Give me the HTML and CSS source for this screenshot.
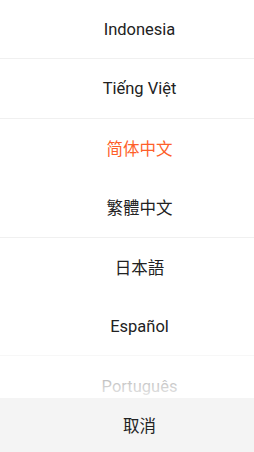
FILE: index.html
```html
<!DOCTYPE html>
<html lang="zh">
<head>
    <meta charset="UTF-8">
    <meta name="viewport" content="width=device-width, initial-scale=1.0">
    <title>语言</title>
    <link rel="stylesheet" href="styles.css">
</head>
<body>
    <!-- 语言列表 -->
    <div class="lang-list">
        <div class="lang-item line">Indonesia</div>
        <div class="lang-item line">Tiếng Việt</div>
        <div class="lang-item active">简体中文</div>
        <div class="lang-item line">繁體中文</div>
        <div class="lang-item">日本語</div>
        <div class="lang-item line">Español</div>
        <div class="lang-item">Português</div>
        <div class="fade"></div>
    </div>

    <!-- 取消按钮 -->
    <div class="cancel">取消</div>
</body>
</html>
```

FILE: styles.css
```css
body {
    margin: 0;
    background: #fff;
    font-family: Roboto, "Noto Sans CJK SC", sans-serif;
    color: #222;
}

/* 列表区域 */
.lang-list {
    position: relative;
    height: 398px;
    overflow: hidden;
}

.lang-item {
    box-sizing: border-box;
    height: 59.4px;
    padding-left: 25px;
    display: flex;
    justify-content: center;
    align-items: center;
    font-size: 16.5px;
}

.line {
    border-bottom: 1px solid #f0f0f0;
}

.active {
    color: #fe5f2a;
}

/* 底部渐隐 */
.fade {
    position: absolute;
    left: 0;
    right: 0;
    bottom: 0;
    height: 60px;
    background: linear-gradient(rgba(255, 255, 255, 0.3), rgba(255, 255, 255, 0.9));
}

.cancel {
    height: 54px;
    padding-left: 25px;
    display: flex;
    justify-content: center;
    align-items: center;
    background: #f4f4f4;
    font-size: 16.5px;
}
```
